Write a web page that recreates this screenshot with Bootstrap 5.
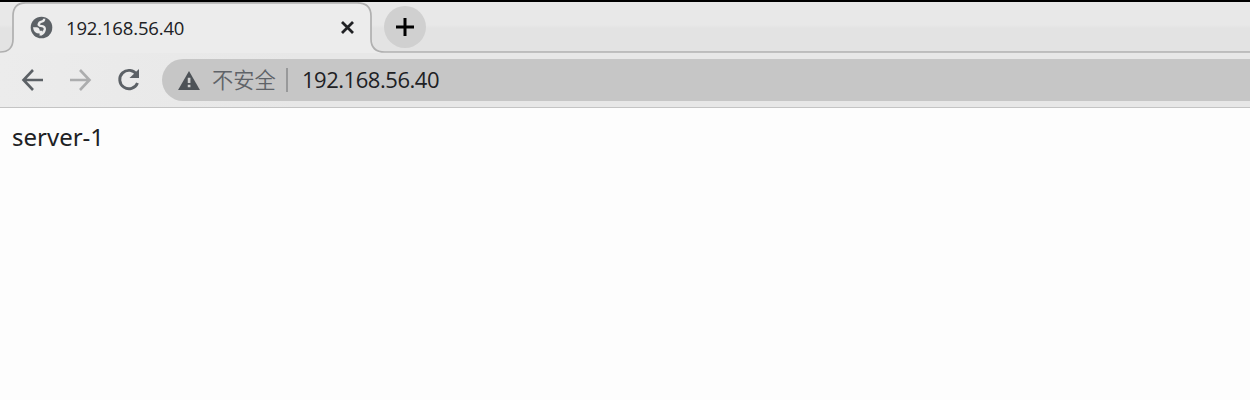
<!DOCTYPE html>
<html lang="zh">
<head>
<meta charset="utf-8">
<meta name="viewport" content="width=device-width, initial-scale=1">
<title>192.168.56.40</title>
<link href="https://cdn.jsdelivr.net/npm/bootstrap@5.3.0/dist/css/bootstrap.min.css" rel="stylesheet">
<style>
body{background:#fdfdfd;font-family:"Open Sans","Noto Sans CJK SC",sans-serif;color:#202124;height:400px}
.tab-strip{height:53px;border-top:2px solid #000;background:linear-gradient(#e8e8e8 0 23px,#e3e3e3 26px)}
.tab-outline{left:0;top:0}
.tab-body{width:372px;padding-left:30px;padding-right:17px}
.tab-label{font-size:18.5px;letter-spacing:-.16px;line-height:24px;margin-left:13px;padding-top:1px}
.new-tab{width:42px;height:42px;margin-left:12px;margin-bottom:2px;background:#d0d0d0}
.toolbar{height:55px;background:linear-gradient(90deg,#ececec,#e7e7e7 300px);border-bottom:1px solid #c4c4c4}
.nav-icons{width:162px;padding-left:20px;gap:24px}
.address{height:42px;background:#c6c6c6;border-radius:21px 0 0 21px;padding-left:16px}
.notice{font-size:21.3px;color:#5f6368;line-height:30px;margin-left:12px;font-weight:350}
.rule{width:2px;height:24px;background:#98999a;margin-left:10px;margin-right:14px}
.host{font-size:22px;letter-spacing:-.46px;line-height:30px;margin-top:-2px}
.page-text{font-family:"Noto Sans",sans-serif;font-size:24px;line-height:30px;padding:14px 12px}
</style>
</head>
<body class="overflow-hidden">
<header>
  <div class="tab-strip position-relative d-flex align-items-center">
    <svg class="tab-outline position-absolute" width="1250" height="51" viewBox="0 0 1250 51" fill="none">
      <path d="M0 50Q13 50 13 37V14Q13 1 26 1H357Q371 1 371 14V37Q371 50 385 50H1250V51H0Z" fill="#ececec"/>
      <path d="M0 50Q13 50 13 37V14Q13 .8 26 .8H357Q371 .8 371 14V37Q371 50 385 50H1250" stroke="#b0b0b0" stroke-width="1.7"/>
    </svg>
    <div class="tab-body position-relative d-flex align-items-center">
      <svg width="23" height="23" viewBox="0 0 23 23"><circle cx="11.5" cy="11.5" r="10.8" fill="#5c6166"/><path d="M3 11.2H6.6Q9.6 11.5 9.8 14.8H12.6V17.4Q12.4 19.6 9.6 19.8V17.5Q3.6 17.5 3 11.2Z" fill="#ececec"/><path d="M14.2 2.8Q14.2 5.4 11.6 5.6Q9 5.9 8.6 8.8Q9.2 10.2 12 10.2Q15.2 10.6 14.8 13.6Q14 17.4 10.8 18.5" fill="none" stroke="#ececec" stroke-width="2.3"/></svg>
      <span class="tab-label">192.168.56.40</span>
      <svg class="ms-auto" width="15" height="15" viewBox="0 0 15 15" stroke="#202124" stroke-width="2.8"><path d="M2 2L13 13M13 2L2 13"/></svg>
    </div>
    <div class="new-tab position-relative rounded-circle d-flex align-items-center justify-content-center">
      <svg width="20" height="20" viewBox="0 0 20 20" stroke="#000" stroke-width="3"><path d="M10 1V19M1 10H19"/></svg>
    </div>
  </div>
  <div class="toolbar d-flex align-items-center">
    <div class="nav-icons d-flex flex-shrink-0">
      <svg width="24" height="24" viewBox="0 0 24 24" fill="none" stroke="#5c6166" stroke-width="2.6"><path d="M23 12H4M13 2L3.5 12L13 22"/></svg>
      <svg width="24" height="24" viewBox="0 0 24 24" fill="none" stroke="#acadae" stroke-width="2.6"><path d="M2 12H21M12 2L21.5 12L12 22"/></svg>
      <svg width="24" height="24" viewBox="0 0 24 24" fill="none"><path d="M20.8 6.7A9.2 9.2 0 1 0 21.5 15" stroke="#5c6166" stroke-width="2.9"/><path d="M23 1V10H13.5Z" fill="#5c6166"/></svg>
    </div>
    <div class="address d-flex align-items-center flex-grow-1">
      <svg width="22" height="19" viewBox="0 0 23 20"><path d="M11.5 0L23 20H0Z" fill="#4d5257"/><path d="M10.2 7h2.8v5.5h-2.8zM10.2 14.5h2.8V17h-2.8z" fill="#d0d0d0"/></svg>
      <span class="notice">不安全</span><span class="rule"></span><span class="host">192.168.56.40</span>
    </div>
  </div>
</header>
<main class="page-text">server-1</main>
<script src="https://cdn.jsdelivr.net/npm/bootstrap@5.3.0/dist/js/bootstrap.bundle.min.js"></script>
</body>
</html>
